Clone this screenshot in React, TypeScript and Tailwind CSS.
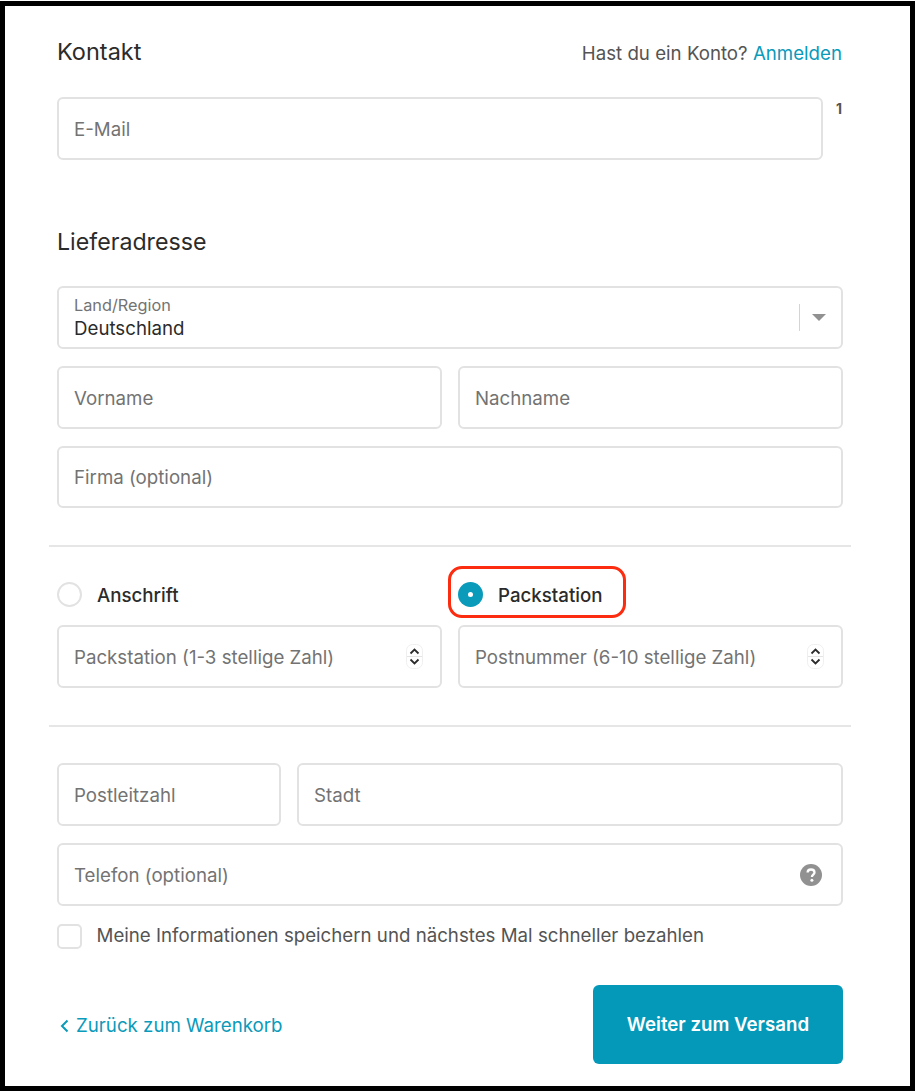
import React from "react";

const font = { fontFamily: "Inter, 'Liberation Sans', sans-serif" };

function Field({ label, className = "", children }: { label: string; className?: string; children?: React.ReactNode }) {
  return (
    <div className={`h-[62.5px] flex items-center justify-between rounded-[6px] border-2 border-[#e2e2e2] bg-white pl-[15px] pr-[17px] min-w-0 ${className}`}>
      <span className="text-[18.7px] text-[#737373] whitespace-nowrap pt-[3px]">{label}</span>
      {children}
    </div>
  );
}

function Spinner() {
  return (
    <svg width="17" height="25" viewBox="0 0 17 25" className="shrink-0">
      <rect x="0.5" y="0.5" width="16" height="24" rx="6" fill="#fff" stroke="#efefef" />
      <line x1="1" y1="12.5" x2="16" y2="12.5" stroke="#e4e4e4" />
      <path d="M4.5 9.5 L8.5 5.5 L12.5 9.5" fill="none" stroke="#2b2b2b" strokeWidth="1.8" />
      <path d="M4.5 15.5 L8.5 19.5 L12.5 15.5" fill="none" stroke="#2b2b2b" strokeWidth="1.8" />
    </svg>
  );
}

export default function App() {
  return (
    <div style={font} className="w-[916px] h-[1092px] bg-white pt-px">
      <div className="w-[915px] h-[1090px] border-[5px] border-black bg-white pl-[44px] pr-[59px]">
        <div className="px-[8px]">
          <div className="flex items-center justify-between h-[30px] mt-[31px]">
            <h2 className="text-[23.5px] text-[#2b2b2b] leading-[30px]">Kontakt</h2>
            <p className="text-[18.7px] text-[#545454] mt-[4px] mr-px">
              Hast du ein Konto? <span className="text-[#0a9aba]">Anmelden</span>
            </p>
          </div>

          <div className="flex mt-[30px]">
            <Field label="E-Mail" className="flex-1" />
            <div className="w-[20px] flex justify-end pt-[3px] pr-[1px] text-[14px] font-bold text-[#545454] leading-[18px]">1</div>
          </div>

          <h2 className="text-[23.2px] text-[#2b2b2b] leading-[30px] mt-[67.5px]">Lieferadresse</h2>

          <div className="mt-[29px] h-[63px] flex items-center justify-between rounded-[6px] border-2 border-[#e2e2e2] pl-[15px] pr-[15px]">
            <div className="flex flex-col">
              <span className="text-[16.3px] leading-[20px] text-[#737373]">Land/Region</span>
              <span className="text-[18.7px] leading-[24px] text-[#2b2b2b] mt-[2px]">Deutschland</span>
            </div>
            <div className="flex items-center">
              <div className="w-px h-[27px] bg-[#d4d4d4] mr-[12px]" />
              <svg width="14" height="7" viewBox="0 0 14 7"><path d="M0 0 H14 L7 7 Z" fill="#919191" /></svg>
            </div>
          </div>

          <div className="grid grid-cols-[384.5px_1fr] gap-[16.5px] mt-[17px]">
            <Field label="Vorname" />
            <Field label="Nachname" />
          </div>
          <Field label="Firma (optional)" className="mt-[17px]" />
        </div>

        <div className="h-[2px] bg-[#e6e6e6] mt-[37px]" />

        <div className="px-[8px]">
          <div className="grid grid-cols-[384.5px_1fr] gap-[16.5px] h-[78px] items-end pb-[15px]">
            <div className="flex items-center gap-[15px]">
              <div className="w-[25px] h-[25px] rounded-full border-2 border-[#e2e2e2]" />
              <span className="text-[18.7px] font-medium text-[#2b2b2b] pt-[2px]">Anschrift</span>
            </div>
            <div className="relative flex items-center gap-[15px]">
              <div className="w-[25px] h-[25px] rounded-full bg-[#0a9aba] flex items-center justify-center">
                <div className="w-[5px] h-[5px] rounded-full bg-white" />
              </div>
              <span className="text-[18.7px] font-medium text-[#2b2b2b] pt-[2px]">Packstation</span>
              <div className="absolute left-[-10px] top-[-14px] w-[178px] h-[52px] rounded-[14px] border-[3px] border-[#fb2c0f]" />
            </div>
          </div>
          <div className="grid grid-cols-[384.5px_1fr] gap-[16.5px]">
            <Field label="Packstation (1-3 stellige Zahl)"><Spinner /></Field>
            <Field label="Postnummer (6-10 stellige Zahl)"><Spinner /></Field>
          </div>
        </div>

        <div className="h-[2px] bg-[#e6e6e6] mt-[37px]" />

        <div className="px-[8px]">
          <div className="flex gap-[16px] mt-[36.5px]">
            <Field label="Postleitzahl" className="w-[224px] shrink-0" />
            <Field label="Stadt" className="flex-1" />
          </div>
          <Field label="Telefon (optional)" className="mt-[17.5px] !pr-[19px]">
            <svg width="22" height="22" viewBox="0 0 22 22" className="shrink-0 mt-[2px]">
              <circle cx="11" cy="11" r="11" fill="#919191" />
              <path d="M7.6 8.6 C7.6 6.6 9.1 5.5 11 5.5 C13 5.5 14.5 6.7 14.5 8.5 C14.5 10.6 11.9 10.7 11.9 13" fill="none" stroke="#fff" strokeWidth="2.3" />
              <circle cx="11.9" cy="16.2" r="1.5" fill="#fff" />
            </svg>
          </Field>

          <div className="flex items-center gap-[14.5px] mt-[16.5px]">
            <div className="w-[25px] h-[25px] rounded-[5px] border-2 border-[#e2e2e2]" />
            <span className="text-[18.7px] text-[#545454]">Meine Informationen speichern und nächstes Mal schneller bezahlen</span>
          </div>

          <div className="flex items-center justify-between mt-[35px]">
            <div className="flex items-center gap-[7px] text-[18.7px] text-[#0a9aba] pt-[2px]">
              <svg width="9" height="14" viewBox="0 0 9 14" className="ml-[3px]"><path d="M7.5 1.5 L2 7 L7.5 12.5" fill="none" stroke="#0a9aba" strokeWidth="2" /></svg>
              <span>Zurück zum Warenkorb</span>
            </div>
            <div className="w-[250px] h-[79px] rounded-[6px] bg-[#0599b9] flex items-center justify-center text-[18.7px] font-semibold text-white">
              Weiter zum Versand
            </div>
          </div>
        </div>
      </div>
    </div>
  );
}
